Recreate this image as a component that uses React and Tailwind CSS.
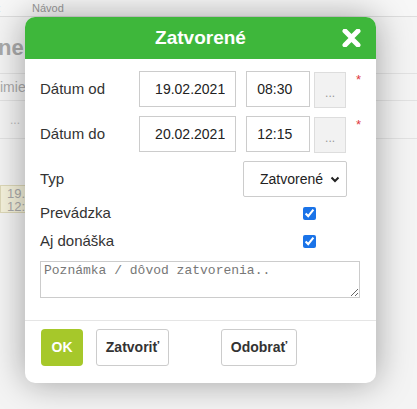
import { useState } from "react";

const font = { fontFamily: "Arial, 'Liberation Sans', sans-serif" };

const App = () => {
  const [prevadzka, setPrevadzka] = useState(true);
  const [donaska, setDonaska] = useState(true);

  return (
    <div
      className="relative w-[417px] h-[409px] overflow-hidden bg-white text-[#333]"
      style={font}
    >
      {/* Pozadie stránky */}
      <div className="h-[17px] bg-[#f7f7f7] border-b border-[#ddd] flex items-center text-[11px] text-[#999]">
        <span className="-ml-[3px]">t</span>
        <span className="ml-[32px]">Návod</span>
      </div>
      <div className="bg-[#f4f4f4] h-full">
        <div className="pt-[20px] pl-0 text-[22px] font-bold text-[#aaa] leading-none -ml-[2px]">
          ne c
        </div>
        <div className="mt-[14px] border-y border-[#e2e2e2] h-[28px] flex items-center text-[14px] text-[#aaa]">
          imie
        </div>
        <div className="h-[38px] border-b border-[#e2e2e2] flex items-center pl-[10px] text-[#bbb] text-[12px]">
          ...
        </div>
        <div className="mt-[46px] w-[60px] h-[28px] bg-[#f5f2dc] border border-[#ddd8b8] text-[13px] leading-[13px] text-[#aaa] pl-[6px] pt-[1px]">
          19.
          <br />
          12:1
        </div>
      </div>

      {/* Dialóg */}
      <div className="absolute left-[25px] top-[17px] w-[351px] rounded-[10px] bg-white shadow-[0_0_35px_rgba(0,0,0,0.35)] overflow-hidden">
        <div className="relative h-[42px] bg-[#3eb73b] flex items-center justify-center">
          <span className="text-white font-bold text-[19px]">Zatvorené</span>
          <svg
            className="absolute right-[15px] top-[12px]"
            width="19"
            height="18"
            viewBox="0 0 19 18"
          >
            <path
              d="M3 2 L9.5 8.5 L16 2 M3 16 L9.5 9.5 L16 16"
              stroke="white"
              strokeWidth="5"
              strokeLinecap="round"
              fill="none"
            />
          </svg>
        </div>

        <div className="px-[15px] pt-[12px]">
          <div className="flex items-center h-[36px]">
            <span className="w-[100px] text-[15px]">Dátum od</span>
            <input
              className="w-[97px] h-[36px] border border-[#ccc] text-right pr-[10px] text-[14px] text-[#222]"
              defaultValue="19.02.2021"
            />
            <input
              className="ml-[10px] w-[64px] h-[36px] border border-[#ccc] pl-[10px] text-[14px] text-[#222]"
              defaultValue="08:30"
            />
            <button className="ml-[4px] w-[32px] h-[36px] mt-[2px] border border-[#ddd] bg-[#f2f2f2] text-[#999] text-[12px] pt-[6px]">
              ...
            </button>
            <span className="self-start ml-[10px] -mt-[1px] text-[#e0383e] text-[13px]">*</span>
          </div>

          <div className="flex items-center h-[36px] mt-[9px]">
            <span className="w-[100px] text-[15px]">Dátum do</span>
            <input
              className="w-[97px] h-[36px] border border-[#ccc] text-right pr-[10px] text-[14px] text-[#222]"
              defaultValue="20.02.2021"
            />
            <input
              className="ml-[10px] w-[64px] h-[36px] border border-[#ccc] pl-[10px] text-[14px] text-[#222]"
              defaultValue="12:15"
            />
            <button className="ml-[4px] w-[32px] h-[36px] mt-[2px] border border-[#ddd] bg-[#f2f2f2] text-[#999] text-[12px] pt-[6px]">
              ...
            </button>
            <span className="self-start ml-[10px] -mt-[1px] text-[#e0383e] text-[13px]">*</span>
          </div>

          <div className="flex items-center justify-between h-[36px] mt-[9px] pr-[14px]">
            <span className="text-[15px]">Typ</span>
            <div className="w-[104px] h-[36px] border border-[#ccc] rounded-[2px] flex items-center justify-end pr-[6px] text-[14px] text-[#222]">
              Zatvorené
              <svg className="ml-[7px]" width="10" height="7" viewBox="0 0 10 7">
                <path
                  d="M1.5 1.5 L5 5 L8.5 1.5"
                  stroke="#222"
                  strokeWidth="2"
                  fill="none"
                />
              </svg>
            </div>
          </div>

          <label className="flex items-center h-[22px] mt-[5px]">
            <span className="w-[263px] text-[15px]">Prevádzka</span>
            <input
              type="checkbox"
              checked={prevadzka}
              onChange={() => setPrevadzka(!prevadzka)}
              className="w-[13px] h-[13px] accent-[#1a73e8]"
            />
          </label>

          <label className="flex items-center h-[22px] mt-[6px]">
            <span className="w-[263px] text-[15px]">Aj donáška</span>
            <input
              type="checkbox"
              checked={donaska}
              onChange={() => setDonaska(!donaska)}
              className="w-[13px] h-[13px] accent-[#1a73e8]"
            />
          </label>

          <textarea
            className="mt-[9px] w-[320px] h-[37px] border border-[#ccc] px-[3px] py-[1px] text-[13px] leading-[16px] placeholder-[#777] block"
            style={{ fontFamily: "'Courier New', 'Liberation Mono', monospace" }}
            placeholder="Poznámka / dôvod zatvorenia.."
          />
        </div>

        <div className="mt-[22px] border-t border-[#e5e5e5] px-[16px] pt-[8px] pb-[17px] flex items-center">
          <button className="w-[42px] h-[37px] rounded-[4px] bg-[#a6c82a] text-white font-bold text-[14px]">
            OK
          </button>
          <button className="ml-[13px] w-[73px] h-[37px] rounded-[3px] border border-[#ccc] bg-white font-bold text-[14px] text-[#333]">
            Zatvoriť
          </button>
          <button className="ml-[52px] w-[76px] h-[37px] rounded-[3px] border border-[#ccc] bg-white font-bold text-[14px] text-[#333]">
            Odobrať
          </button>
        </div>
      </div>
    </div>
  );
};

export default App;
